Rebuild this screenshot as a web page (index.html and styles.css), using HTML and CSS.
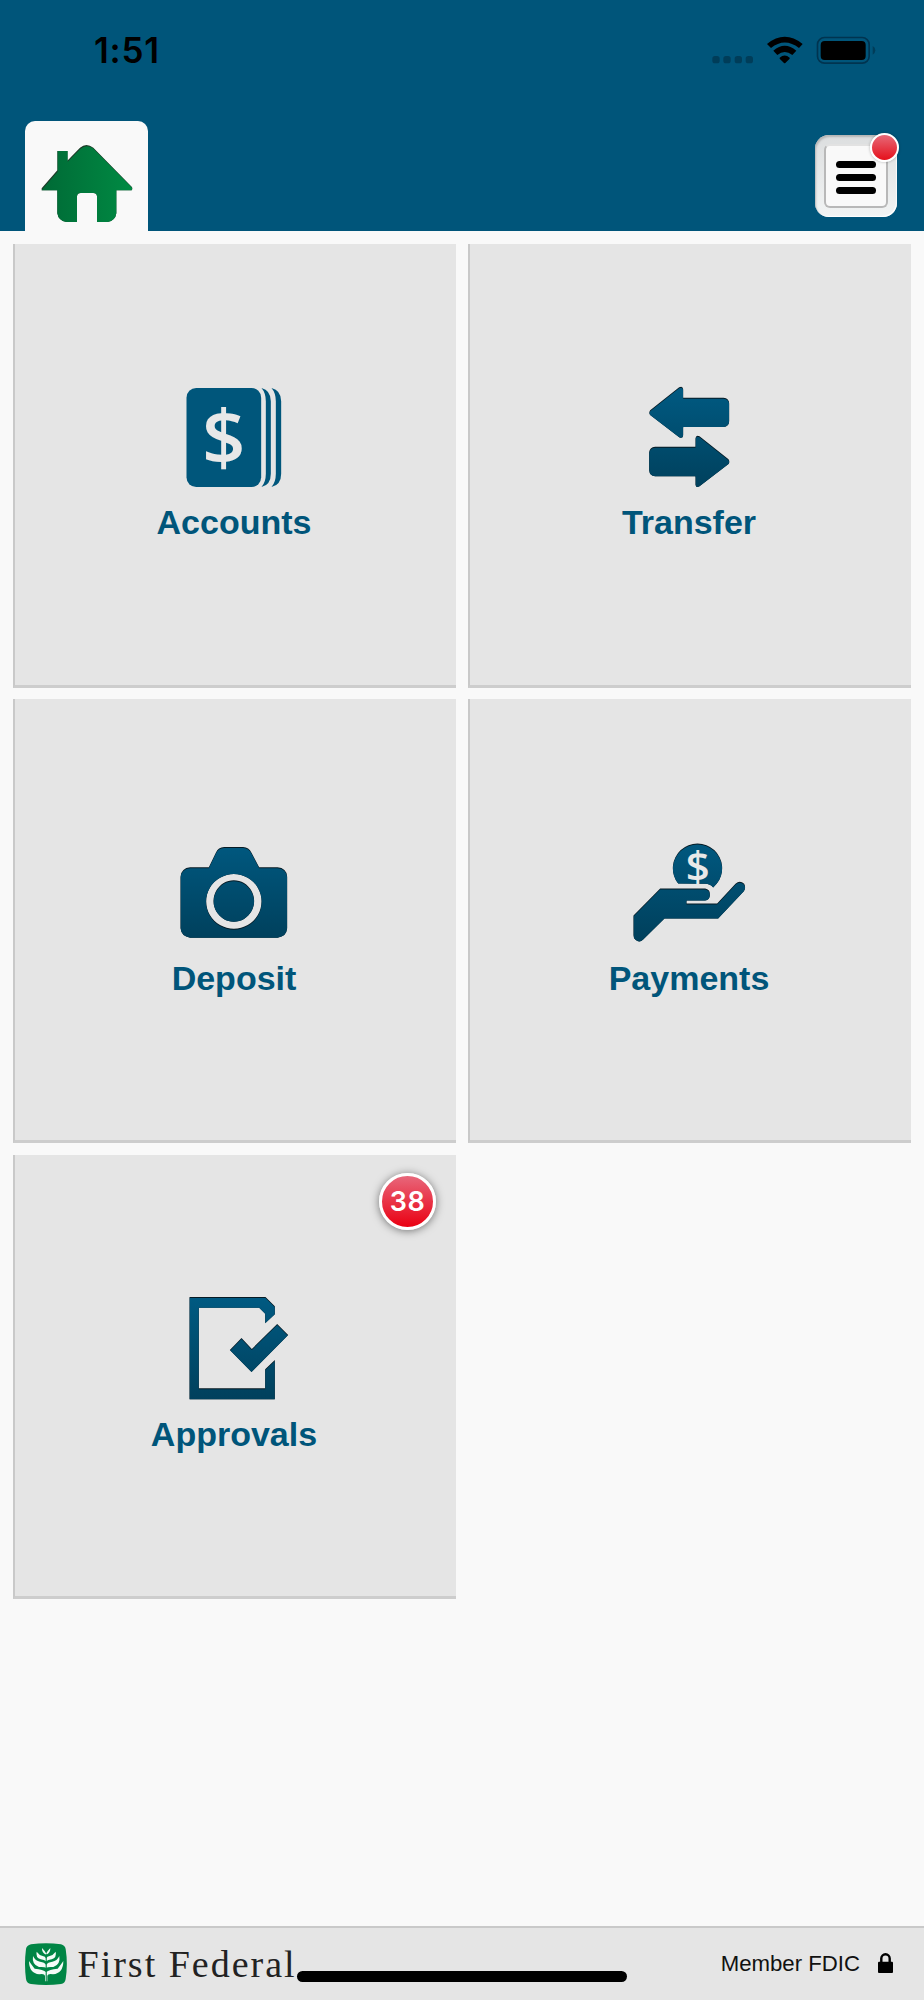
FILE: index.html
```html
<!DOCTYPE html>
<html lang="en">

<head>
    <meta charset="UTF-8">
    <meta name="viewport" content="width=device-width, initial-scale=1.0">
    <title>First Federal</title>
    <link rel="stylesheet" href="styles.css">
</head>

<body>
    <svg class="defs" width="0" height="0">
        <defs>
            <linearGradient id="blue" gradientUnits="userSpaceOnUse" x1="0" y1="50" x2="0" y2="360">
                <stop offset="0" stop-color="#005a82" />
                <stop offset="1" stop-color="#00405c" />
            </linearGradient>
            <linearGradient id="green" gradientUnits="userSpaceOnUse" x1="124" y1="0" x2="396" y2="0">
                <stop offset="0" stop-color="#006a36" />
                <stop offset="1" stop-color="#008a43" />
            </linearGradient>
            <filter id="inset" color-interpolation-filters="sRGB">
                <feFlood flood-color="#061a24" />
                <feComposite operator="in" in2="SourceAlpha" result="dark" />
                <feOffset in="SourceAlpha" dy="4" result="moved" />
                <feComposite in="SourceGraphic" in2="moved" operator="in" result="top" />
                <feMerge>
                    <feMergeNode in="dark" />
                    <feMergeNode in="top" />
                </feMerge>
            </filter>
        </defs>
    </svg>

    <header>
        <div class="status">
            <span class="time">1:51</span>
            <svg class="status-icons" width="164" height="30" viewBox="97 105 492 90">
                <g fill="#003d59">
                    <rect x="98" y="168" width="22" height="22" rx="8" />
                    <rect x="131" y="168" width="22" height="22" rx="8" />
                    <rect x="165" y="168" width="22" height="22" rx="8" />
                    <rect x="198" y="168" width="22" height="22" rx="8" />
                    <path d="M579 138q8 4 8 13t-8 13z" />
                </g>
                <path d="M262 132Q315 89 369 132L358 144Q315 111 274 144z" />
                <path d="M281 152Q315 123 350 152L338 165Q315 147 293 165z" />
                <path d="M300 173Q315 160 330 173V176L317 189Q315 191 313 189L300 176z" />
                <rect x="413.500" y="112.500" width="155" height="77" rx="21" fill="none" stroke="#003450" stroke-width="5" />
                <rect x="423" y="123" width="135" height="57" rx="12" />
            </svg>
        </div>
        <div class="nav">
            <div class="home">
                <svg width="92" height="79" viewBox="122 430 276 237">
                    <path d="M124 563L171 509V451H201V480L239 441Q258 425 279 441L394 558Q398 563 394 569H348V638Q345 660 322 664H290V587Q289 577 279 577H241Q231 577 230 587V664H198Q174 660 171 638V569H124z" fill="#1d3b28" />
                    <path d="M126 566L172 513V451H202V483L240 445Q258 430 278 443L394 560Q397 565 394 569H348V638Q345 660 322 664H290V587Q289 577 279 577H241Q231 577 230 587V664H198Q174 660 171 638V569H124z" fill="url(#green)" />
                </svg>
            </div>
            <div class="menu">
                <div class="menu-inner">
                    <span></span>
                    <span></span>
                    <span></span>
                </div>
                <div class="dot"></div>
            </div>
        </div>
    </header>

    <main>
        <div class="tile">
            <svg class="icon" viewBox="103.500 39 360 330">
                <g fill="#00567b">
                    <rect x="141" y="54" width="224" height="297" rx="29" />
                    <path d="M366 54Q394 61 394 94V311Q394 344 366 351Q379 336 379 311V94Q379 69 366 54z" />
                    <path d="M396 54Q425 61 425 94V311Q425 344 396 351Q409 336 409 311V94Q409 69 396 54z" />
                </g>
                <text class="dollar" x="253" y="282" font-size="228">$</text>
            </svg>
            <div class="label">Accounts</div>
        </div>

        <div class="tile">
            <svg class="icon" viewBox="88.500 39 360 330">
                <g fill="url(#blue)" filter="url(#inset)">
                    <path d="M152 121L239 52Q250 47 251 58V83H372Q389 85 389 100V154Q388 170 372 171H251V196Q250 207 239 202L152 135Q147 128 152 121z" />
                    <path d="M387 268L300 199Q289 194 288 205V230H167Q150 232 149 247V301Q150 318 167 319H288V344Q289 355 300 349L387 282Q392 275 387 268z" />
                </g>
            </svg>
            <div class="label">Transfer</div>
        </div>

        <div class="tile">
            <svg class="icon" viewBox="73.500 54 360 330">
                <path fill="url(#blue)" filter="url(#inset)" fill-rule="evenodd" d="M122 142H178L199 98Q206 82 224 81H281Q298 82 306 98L329 142H384Q411 144 413 170V325Q411 350 384 353H122Q96 350 93 325V170Q96 144 122 142zM253 162a83 82 0 1 0 .1 0zM253 181a61 62 0 1 1 -.1 0z" />
            </svg>
            <div class="label">Deposit</div>
        </div>

        <div class="tile">
            <svg class="icon" viewBox="118.500 55.500 360 330">
                <g fill="url(#blue)" filter="url(#inset)">
                    <path d="M266 192A74 74 0 1 1 382 192L371 204Q362 193 347 193z" />
                    <path d="M132 288L212 207H347Q361 210 361 223V229Q360 241 347 243H291V252H383L438 193Q451 181 464 193Q470 205 463 215L386 297H225L161 360Q150 371 138 361Q132 357 132 347z" />
                </g>
                <text class="dollar" x="325" y="185" font-size="126">$</text>
            </svg>
            <div class="label">Payments</div>
        </div>

        <div class="tile">
            <svg class="icon" viewBox="103.500 42 360 330">
                <g fill="url(#blue)" filter="url(#inset)">
                    <path d="M150 51H378L406 79V103L377 130V101L359 83H178V325H377V268L406 240V358H150z" />
                    <path d="M271 210L306 174L337 207L413 132L446 165L336 276z" />
                </g>
            </svg>
            <div class="label">Approvals</div>
            <div class="badge">38</div>
        </div>
    </main>

    <footer>
        <svg class="logo" width="42" height="42" viewBox="74 95 126 126">
            <path d="M92 99Q137 93 182 99Q194 102 196 113Q203 158 196 203Q194 216 182 218Q137 224 92 218Q79 216 77 203Q71 158 77 113Q79 102 92 99z" fill="#008545" />
            <g fill="#f5fbf7">
                <path id="leaves" d="M134 210V193Q132 186 117 189Q86 186 86 149Q91 157 103 172Q129 174 137 182V169Q133 166 116 167Q94 160 98 134Q105 149 119 151Q133 153 137 160V150Q133 146 121 144Q105 138 109 121Q117 132 127 134Q135 135 137 141V130Q124 124 125 110Q133 118 137 126V210z" />
                <use href="#leaves" transform="translate(275 0) scale(-1 1)" />
            </g>
            <path d="M137.500 128V212" stroke="#008545" stroke-width="3" />
        </svg>
        <span class="brand">First Federal</span>
        <span class="fdic">Member FDIC</span>
        <svg class="lock" width="15" height="20" viewBox="0 0 15 20">
            <path d="M3.300 10V5.500a4.200 4.200 0 0 1 8.400 0V10" fill="none" stroke="#000" stroke-width="2.400" />
            <rect y="8.700" width="15" height="11.300" rx="1" />
        </svg>
        <div class="home-bar"></div>
    </footer>
</body>

</html>
```

FILE: styles.css
```css
* {
    box-sizing: border-box;
}

body {
    margin: 0;
    height: 2000px;
    display: flex;
    flex-direction: column;
    position: relative;
    background-color: #f9f9f9;
    font-family: "Liberation Sans", Arial, sans-serif;
}

.defs {
    position: absolute;
}

svg {
    display: block;
    flex-shrink: 0;
}

header {
    height: 231.300px;
    background-color: #00557a;
}

.status {
    height: 120.500px;
    padding: 29px 48px 0 94px;
    display: flex;
    justify-content: space-between;
}

.time {
    font-family: Inter, sans-serif;
    font-weight: 600;
    font-size: 35px;
    line-height: 43px;
    letter-spacing: 0.8px;
}

.status-icons {
    margin-top: 6px;
}

.nav {
    display: flex;
    justify-content: space-between;
    padding: 0 27px 0 24.700px;
}

.home {
    width: 123.300px;
    height: 111px;
    padding: 23px 0 0 16px;
    background-color: #f9f9f9;
    border-radius: 10px 10px 0 0;
}

.menu {
    position: relative;
    width: 82px;
    height: 82px;
    margin-top: 14.500px;
    padding: 9px;
    border-radius: 14px;
    background: linear-gradient(#dcdedf, #f2f4f4);
    box-shadow: inset 1px 2px 2px #b5b5b5, inset -1px -1px 1px #fff;
}

.menu-inner {
    height: 64px;
    padding: 2px 0 0 10px;
    display: flex;
    flex-direction: column;
    justify-content: center;
    gap: 6px;
    border: 2px solid #b8b8b8;
    border-top-color: #e2e2e2;
    border-radius: 6px;
    background-color: #f9f9f9;
}

.menu-inner span {
    width: 40px;
    height: 7px;
    border-radius: 4px;
    background-color: #000;
}

.dot {
    position: absolute;
    top: -2px;
    right: -2px;
    width: 29px;
    height: 29px;
    border: 2px solid #fff;
    border-radius: 50%;
    background: linear-gradient(#e7707f, #e50914) border-box;
    box-shadow: 0 0 3px rgba(0, 0, 0, 0.3);
}

main {
    flex: 1;
    display: grid;
    grid-template-columns: 443px 443px;
    grid-auto-rows: 443.700px;
    gap: 11.900px 12px;
    align-content: start;
    padding: 12.600px 13px;
}

.tile {
    position: relative;
    display: flex;
    flex-direction: column;
    align-items: center;
    padding: 139px 3px 0 0;
    background-color: #e5e5e5;
    border-left: 2px solid #c9c9c9;
    border-bottom: 3px solid #cdcdcd;
}

.icon {
    width: 120px;
    height: 110px;
}

.dollar {
    font-family: "Open Sans", sans-serif;
    font-weight: 600;
    fill: #e8e8e8;
    text-anchor: middle;
}

.label {
    margin-top: 9.500px;
    font-size: 34px;
    font-weight: bold;
    line-height: 40px;
    color: #00557a;
}

.badge {
    position: absolute;
    top: 18px;
    right: 20px;
    width: 57px;
    height: 57px;
    line-height: 51px;
    text-align: center;
    font-family: Inter, sans-serif;
    font-size: 27px;
    font-weight: 600;
    letter-spacing: 0.5px;
    color: #fff;
    border: 3px solid #fff;
    border-radius: 50%;
    background: linear-gradient(#e8677b, #ea0012);
    box-shadow: 0 1px 8px rgba(0, 0, 0, 0.5);
}

footer {
    height: 74px;
    padding: 0 31px 0 24.500px;
    display: flex;
    align-items: center;
    background-color: #e5e5e5;
    border-top: 2px solid #c9c9c9;
}

.brand {
    margin-left: 11px;
    font-family: "Liberation Serif", serif;
    font-size: 38px;
    line-height: 44px;
    letter-spacing: 2px;
    white-space: nowrap;
    color: #222;
}

.fdic {
    margin-left: auto;
    margin-right: 18px;
    font-size: 22.200px;
    line-height: 26px;
    color: #111;
}

.lock {
    margin-top: -2px;
}

.home-bar {
    position: absolute;
    left: 297px;
    bottom: 18px;
    width: 330px;
    height: 11px;
    border-radius: 6px;
    background-color: #000;
}
```
